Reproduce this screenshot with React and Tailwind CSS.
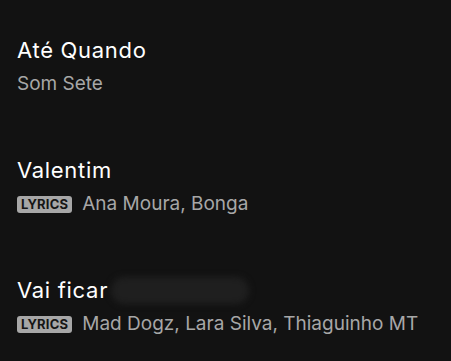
export default function App() {
  const rows = [
    { title: "Até Quando", artists: "Som Sete", lyrics: false },
    { title: "Valentim", artists: "Ana Moura, Bonga", lyrics: true },
    { title: "Vai ficar", artists: "Mad Dogz, Lara Silva, Thiaguinho MT", lyrics: true, hidden: true },
  ];
  return (
    <div className="w-[451px] h-[361px] bg-[#121212] flex flex-col overflow-hidden" style={{ fontFamily: "Inter, 'Noto Sans', sans-serif" }}>
      <div className="flex-1 flex flex-col pt-[36px]">
        {rows.map((r) => (
          <div key={r.title} className="h-[120px] pl-[17px]">
            <div className="flex items-center h-[28px]">
              <span className="text-[22px] text-white tracking-[0.7px]">{r.title}</span>
              {r.hidden && (
                <span className="ml-[3px] inline-block w-[138px] h-[27px] rounded-full bg-[#1f1f1f] blur-[3px]"></span>
              )}
            </div>
            <div className="flex items-center h-[26px] mt-[7px]">
              {r.lyrics && (
                <span className="mr-[10px] h-[17px] px-[4px] rounded-[3px] bg-[#a7a7a7] text-[#161616] text-[13px] font-bold leading-[17px] tracking-[0.2px]">
                  LYRICS
                </span>
              )}
              <span className="text-[19px] text-[#a7a7a7]">{r.artists}</span>
            </div>
          </div>
        ))}
      </div>
      <div className="h-[15px] bg-black"></div>
    </div>
  );
}
